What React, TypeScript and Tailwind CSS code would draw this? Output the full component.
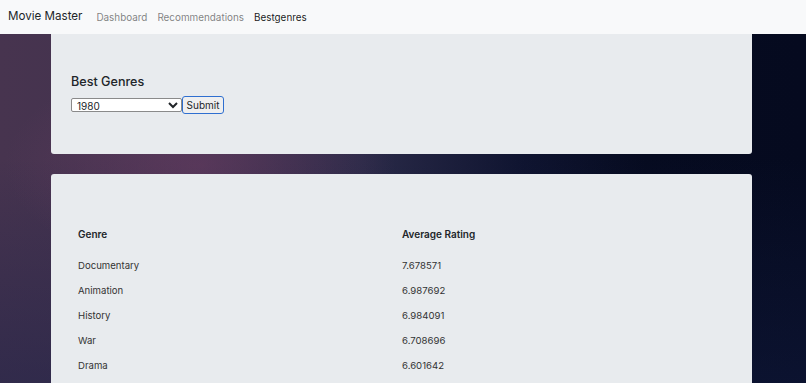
import { useState } from 'react';

const rows = [
  { genre: 'Documentary', rating: '7.678571' },
  { genre: 'Animation', rating: '6.987692' },
  { genre: 'History', rating: '6.984091' },
  { genre: 'War', rating: '6.708696' },
  { genre: 'Drama', rating: '6.601642' },
];

const App = () => {
  const [year, setYear] = useState('1980');

  return (
    <div className="min-h-screen font-['Inter',sans-serif] text-[#212529] bg-[radial-gradient(ellipse_260px_140px_at_200px_165px,rgba(110,62,100,0.55),transparent_75%),linear-gradient(180deg,rgba(0,0,0,0)_40%,rgba(20,30,70,0.45)_100%),linear-gradient(90deg,#47344f_0%,#42324f_20%,#2a2a48_45%,#0f1430_65%,#060b20_80%,#050a1f_100%)]">
      {/* Navbar */}
      <nav className="h-[34px] bg-[#f8f9fa] flex items-center pl-2">
        <span className="text-[11.6px] text-[#212529]">Movie Master</span>
        <div className="flex items-center gap-[10px] text-[9.9px] ml-[14px]">
          <a className="text-black/50">Dashboard</a>
          <a className="text-black/50">Recommendations</a>
          <a className="text-black/90">Bestgenres</a>
        </div>
      </nav>

      <div className="ml-[51px] w-[701px] flex flex-col gap-5">
        {/* Form card */}
        <div className="h-[120px] bg-[#e8ebee] rounded-b-[3px] px-5 pt-[40px]">
          <h2 className="text-[12.6px] font-medium leading-none mb-[7px] pt-[2px]">Best Genres</h2>
          <div className="flex items-center">
            <select
              value={year}
              onChange={(e) => setYear(e.target.value)}
              className="w-[111px] h-[14px] text-[10px] leading-none bg-white border border-[#8a8a8a] rounded-[2px] pl-[1px]"
            >
              <option>1980</option>
              <option>1990</option>
              <option>2000</option>
              <option>2010</option>
            </select>
            <button className="h-[18px] w-[42px] text-[10px] bg-[#efefef] border border-[#2f6fd0] rounded-[3px] leading-none">
              Submit
            </button>
          </div>
        </div>

        {/* Table card */}
        <div className="bg-[#e8ebee] rounded-[3px] px-5 pt-[50px] pb-4">
          <table className="w-full text-[9.6px] text-left">
            <thead>
              <tr className="h-[21px] text-[10px]">
                <th className="w-[324px] px-[7px] font-semibold">Genre</th>
                <th className="px-[7px] font-semibold">Average Rating</th>
              </tr>
            </thead>
            <tbody>
              <tr className="h-[9px]"><td colSpan={2} /></tr>
              {rows.map((r) => (
                <tr key={r.genre} className="h-[25px] text-[#333]">
                  <td className="px-[7px]">{r.genre}</td>
                  <td className="px-[7px]">{r.rating}</td>
                </tr>
              ))}
            </tbody>
          </table>
        </div>
      </div>
    </div>
  );
};

export default App;
